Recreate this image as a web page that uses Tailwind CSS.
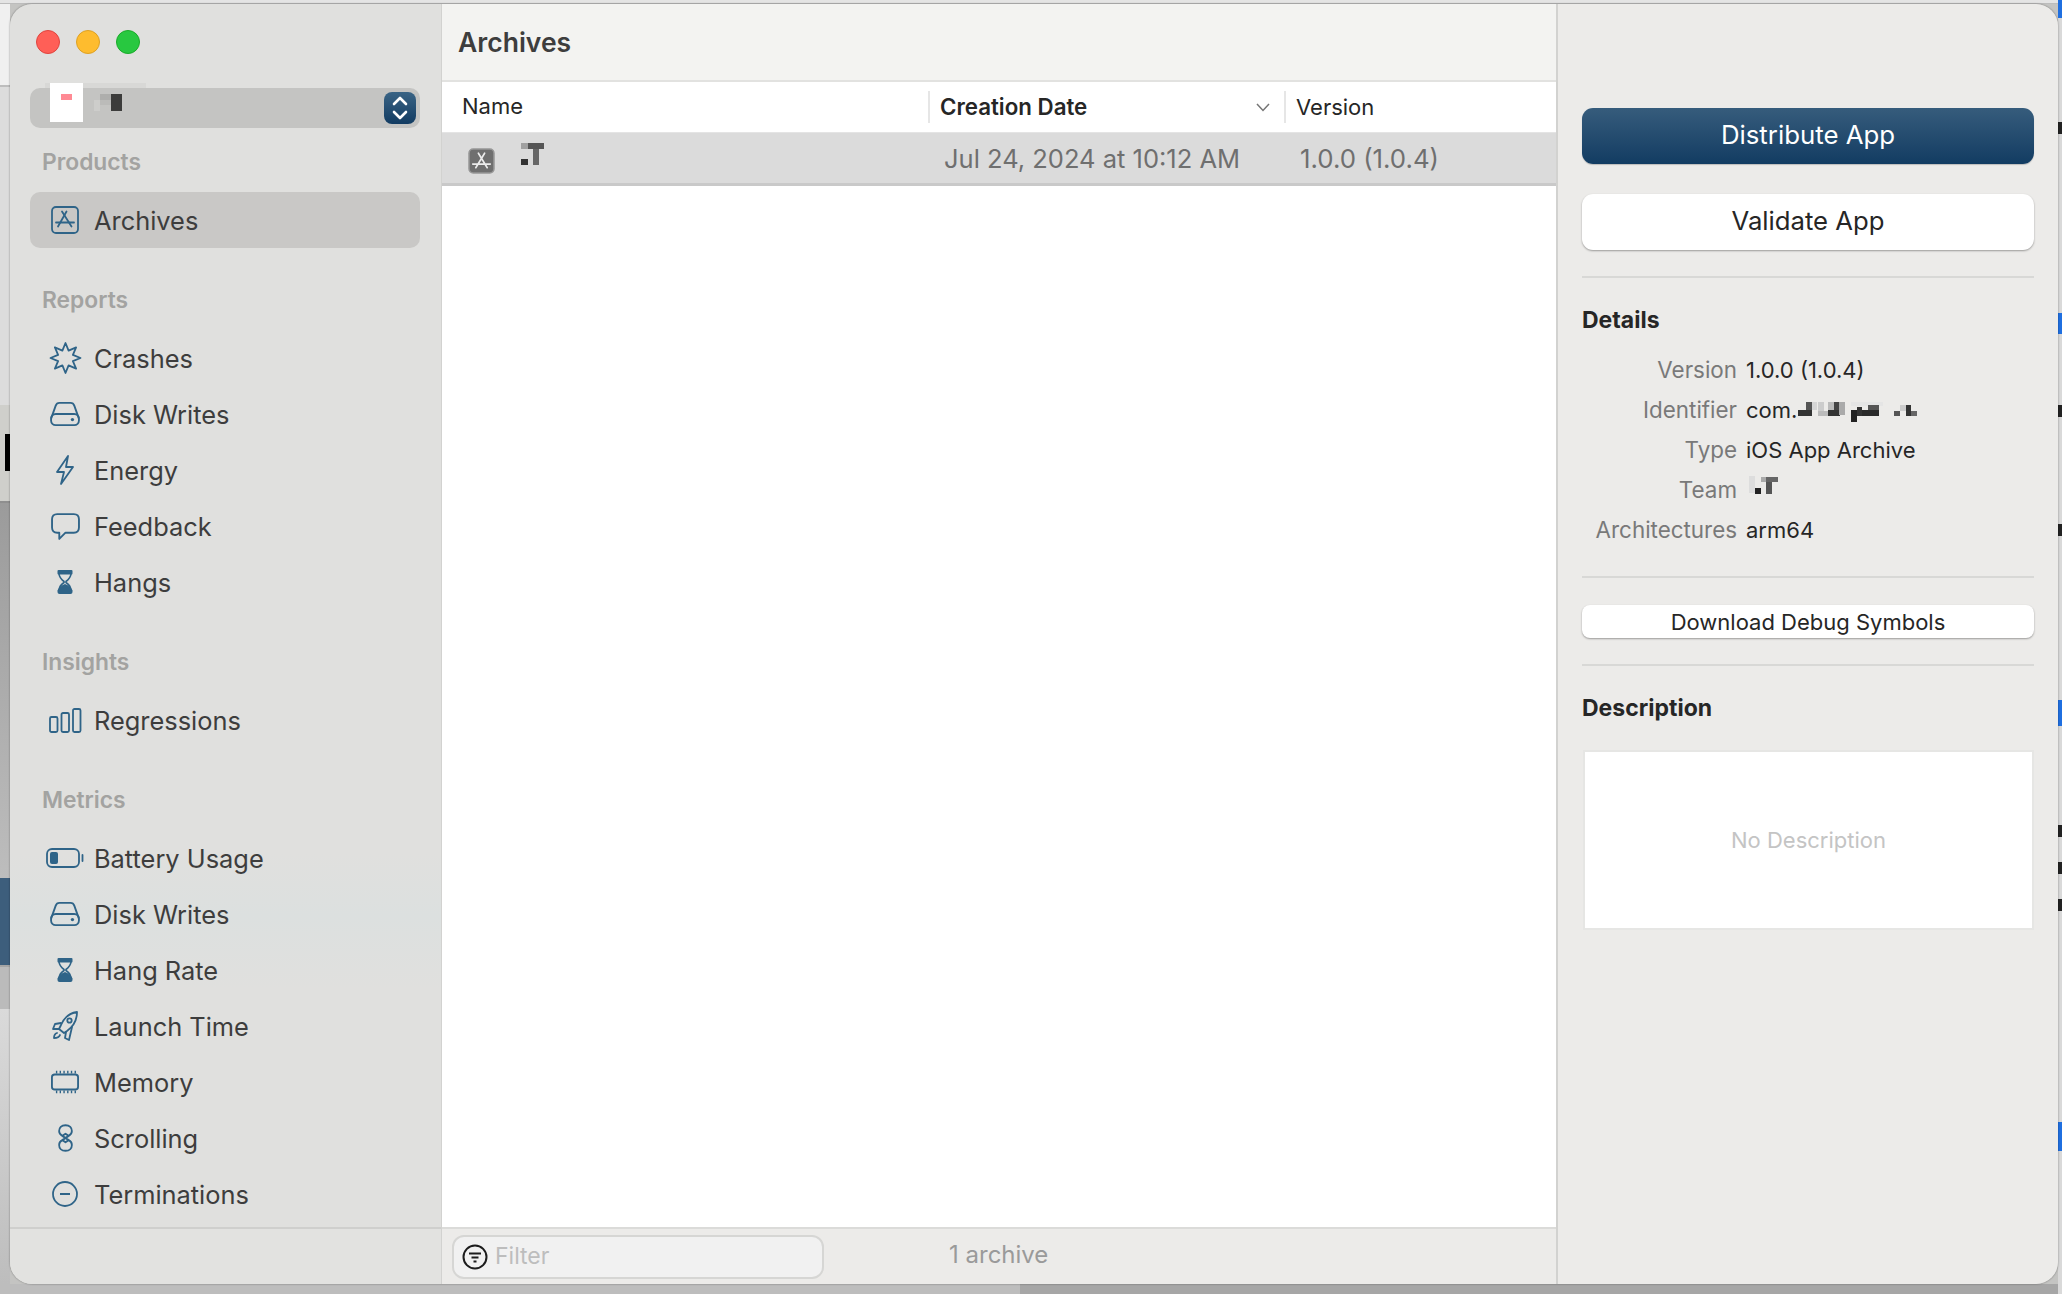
<!DOCTYPE html>
<html lang="en">
<head>
    <meta charset="UTF-8">
    <title>Archives</title>
    <script src="https://cdn.jsdelivr.net/npm/@tailwindcss/browser@4"></script>
</head>
<body class="relative w-[2062px] h-[1294px] overflow-hidden bg-[#c4c4c2] font-[Inter,sans-serif]">
    <svg class="hidden">
        <symbol id="i-disk" viewBox="0 0 34 28"><path d="M2 19 L7 5 Q8 2 11 2 H23 Q26 2 27 5 L32 19" fill="none" stroke="currentColor" stroke-width="2"/><rect x="2" y="14" width="30" height="12" rx="5" fill="none" stroke="currentColor" stroke-width="2"/><circle cx="25" cy="20" r="1.8" fill="currentColor"/></symbol>
        <symbol id="i-hourglass" viewBox="0 0 16 24"><rect x="0.5" y="0" width="15" height="4.500" rx="1" fill="currentColor"/><path d="M2 4 Q2.500 8 7 11.500 V12.500 Q2.500 15.500 2 20 M14 4 Q13.500 8 9 11.500 V12.500 Q13.500 15.500 14 20" fill="none" stroke="currentColor" stroke-width="1.600"/><path d="M8 14 Q14 16.500 15.500 20.500 V22 Q15.500 24 13.500 24 H2.500 Q0.500 24 0.500 22 V20.500 Q2 16.500 8 14 Z" fill="currentColor"/></symbol>
    </svg>

    <!-- stuff behind the window -->
    <div class="absolute left-0 top-0 w-[10px] h-full flex flex-col">
        <div class="h-[87px] bg-[#f0f0f0] border-b-2 border-[#bdbdbd]"></div>
        <div class="h-[318px] bg-[#dcdcdc]"></div>
        <div class="h-[98px] bg-[#cfcfcb] border-b-2 border-[#8f8f8f] flex flex-col items-end pt-[29px]"><div class="w-[5px] h-[37px] bg-black"></div></div>
        <div class="h-[375px] bg-linear-to-b from-[#9b9b9b] to-[#bdbdbd]"></div>
        <div class="h-[87px] bg-[#3d5e7c]"></div>
        <div class="h-[44px] bg-[#bbbbbb] border-t-2 border-[#a5a5a5]"></div>
        <div class="flex-1 bg-linear-to-b from-[#dadada] to-[#bcbcbc]"></div>
    </div>
    <div class="absolute left-0 top-0 w-full h-[4px] bg-[#e4e4e4] border-b border-[#bcbcbc]"></div>
    <div class="absolute left-0 top-[1284px] w-full h-[10px] flex">
        <div class="w-[1020px] bg-[#bdbdbd]"></div>
        <div class="flex-1 bg-[#a6a6a6]"></div>
    </div>
    <div class="absolute left-[2058px] top-0 w-[4px] h-full bg-[#d9d9d9]">
        <div class="absolute left-0 top-0 w-[4px] h-[18px] bg-[#1f6fe0]"></div>
        <div class="absolute left-0 top-[122px] w-[4px] h-[12px] bg-[#222]"></div>
        <div class="absolute left-0 top-[313px] w-[4px] h-[21px] bg-[#1f6fe0]"></div>
        <div class="absolute left-0 top-[405px] w-[4px] h-[12px] bg-[#222]"></div>
        <div class="absolute left-0 top-[524px] w-[4px] h-[12px] bg-[#222]"></div>
        <div class="absolute left-0 top-[700px] w-[4px] h-[26px] bg-[#1f6fe0]"></div>
        <div class="absolute left-0 top-[825px] w-[4px] h-[12px] bg-[#222]"></div>
        <div class="absolute left-0 top-[862px] w-[4px] h-[12px] bg-[#222]"></div>
        <div class="absolute left-0 top-[899px] w-[4px] h-[12px] bg-[#222]"></div>
        <div class="absolute left-0 top-[1122px] w-[4px] h-[29px] bg-[#1f6fe0]"></div>
    </div>

    <!-- window -->
    <div class="absolute left-[10px] top-[4px] w-[2048px] h-[1280px] rounded-[22px] overflow-hidden flex shadow-[0_0_2px_rgba(0,0,0,0.45)]">

        <!-- sidebar -->
        <aside class="w-[431px] shrink-0 flex flex-col bg-[linear-gradient(to_bottom,#e0e0de_0,#e0e0de_850px,#dce0df_911px,#e0e0de_985px)] text-[#3d3d3d] text-[25.4px]">
            <div class="h-[84px] shrink-0 flex gap-[16px] pl-[26px] pt-[26px]">
                <span class="w-[24px] h-[24px] rounded-full bg-[#ff5f57] border border-[#e0443e]"></span>
                <span class="w-[24px] h-[24px] rounded-full bg-[#febc2e] border border-[#dea123]"></span>
                <span class="w-[24px] h-[24px] rounded-full bg-[#28c840] border border-[#1aab29]"></span>
            </div>

            <div class="relative ml-[20px] mr-[21px] h-[40px] shrink-0 rounded-[10px] bg-[#c4c4c2]">
                <div class="absolute left-[15px] top-[-5px] w-[101px] h-[5px] bg-[#d8d8d6]"></div>
                <div class="absolute left-[20px] top-[-5px] w-[33px] h-[39px] bg-white"></div>
                <div class="absolute left-[31px] top-[6px] w-[11px] h-[6px] bg-[#ff8a94]"></div>
                <svg class="absolute left-[64px] top-[6px]" width="28" height="17" shape-rendering="crispEdges"><rect x="6" y="0" width="11" height="6" fill="#aeaeac"/><rect x="0" y="6" width="6" height="11" fill="#cdcdcb"/><rect x="6" y="6" width="11" height="5" fill="#bbbbb9"/><rect x="17" y="0" width="11" height="17" fill="#3c3c3b"/></svg>
                <div class="absolute right-[4px] top-[4px] w-[32px] h-[32px] rounded-[8px] bg-linear-to-b from-[#3a6485] to-[#123c62] flex items-center justify-center">
                    <svg width="16" height="26" viewBox="0 0 16 26" fill="none" stroke="white" stroke-width="2.6" stroke-linecap="round" stroke-linejoin="round"><path d="M2 9 L8 3 L14 9"/><path d="M2 17 L8 23 L14 17"/></svg>
                </div>
            </div>

            <div class="mt-[14px] ml-[20px] mr-[21px] flex flex-col text-[#2f6488]">
                <div class="h-[40px] mb-[10px] pl-[12px] flex items-center text-[22.8px] font-semibold text-[#a3a3a1]">Products</div>
                <div class="h-[56px] rounded-[10px] bg-[#c9c8c6] pl-[15px] flex items-center gap-[9px]">
                    <span class="w-[40px] flex justify-center"><svg width="28" height="28" viewBox="0 0 28 28" fill="none" stroke="currentColor" stroke-width="1.8" stroke-linecap="round"><rect x="1" y="1" width="26" height="26" rx="4"/><path d="M11 5.500 L20.500 20.500"/><path d="M15.500 5.500 L7 20.500"/><path d="M5 16.500 H23"/></svg></span>
                    <span class="mt-[2px] text-[#3d3d3d]">Archives</span>
                </div>

                <div class="h-[40px] mt-[32px] mb-[10px] pl-[12px] flex items-center text-[22.8px] font-semibold text-[#a3a3a1]">Reports</div>
                <div class="h-[56px] pl-[15px] flex items-center gap-[9px]">
                    <span class="w-[40px] flex justify-center"><svg width="33" height="32" viewBox="0 0 32 32" fill="none" stroke="currentColor" stroke-width="1.8" stroke-linejoin="round"><polygon points="16,1 19.100,8.600 26.600,5.400 23.400,12.900 31,16 23.400,19.100 26.600,26.600 19.100,23.400 16,31 12.900,23.400 5.400,26.600 8.600,19.100 1,16 8.600,12.900 5.400,5.400 12.900,8.600"/></svg></span>
                    <span class="mt-[2px] text-[#3d3d3d]">Crashes</span>
                </div>
                <div class="h-[56px] pl-[15px] flex items-center gap-[9px]">
                    <span class="w-[40px] flex justify-center"><svg width="32" height="26"><use href="#i-disk"/></svg></span>
                    <span class="mt-[2px] text-[#3d3d3d]">Disk Writes</span>
                </div>
                <div class="h-[56px] pl-[15px] flex items-center gap-[9px]">
                    <span class="w-[40px] flex justify-center"><svg width="20" height="30" viewBox="0 0 20 30" fill="none" stroke="currentColor" stroke-width="1.8" stroke-linejoin="round"><path d="M13 1 L2 17 H9 L6 29 L18 12 H11 Z"/></svg></span>
                    <span class="mt-[2px] text-[#3d3d3d]">Energy</span>
                </div>
                <div class="h-[56px] pl-[15px] flex items-center gap-[9px]">
                    <span class="w-[40px] flex justify-center"><svg width="29" height="27" viewBox="0 0 28 26" fill="none" stroke="currentColor" stroke-width="1.8" stroke-linejoin="round"><path d="M6 1 H22 Q27 1 27 6 V14 Q27 19 22 19 H14 L8 25 V19 H6 Q1 19 1 14 V6 Q1 1 6 1 Z"/></svg></span>
                    <span class="mt-[2px] text-[#3d3d3d]">Feedback</span>
                </div>
                <div class="h-[56px] pl-[15px] flex items-center gap-[9px]">
                    <span class="w-[40px] flex justify-center"><svg width="16" height="24"><use href="#i-hourglass"/></svg></span>
                    <span class="mt-[2px] text-[#3d3d3d]">Hangs</span>
                </div>

                <div class="h-[40px] mt-[32px] mb-[10px] pl-[12px] flex items-center text-[22.8px] font-semibold text-[#a3a3a1]">Insights</div>
                <div class="h-[56px] pl-[15px] flex items-center gap-[9px]">
                    <span class="w-[40px] flex justify-center"><svg width="33" height="25" viewBox="0 0 33 25" fill="none" stroke="currentColor" stroke-width="1.8"><rect x="1" y="9" width="7.500" height="15" rx="1.500"/><rect x="12.500" y="5" width="7.500" height="19" rx="1.500"/><rect x="24" y="1" width="7.500" height="23" rx="1.500"/></svg></span>
                    <span class="mt-[2px] text-[#3d3d3d]">Regressions</span>
                </div>

                <div class="h-[40px] mt-[32px] mb-[10px] pl-[12px] flex items-center text-[22.8px] font-semibold text-[#a3a3a1]">Metrics</div>
                <div class="h-[56px] pl-[15px] flex items-center gap-[9px]">
                    <span class="w-[40px] flex justify-center"><svg width="38" height="20" viewBox="0 0 38 20" fill="none" stroke="currentColor" stroke-width="1.8"><rect x="1" y="1" width="32" height="18" rx="5"/><rect x="4" y="4" width="8" height="12" rx="2" fill="currentColor" stroke="none"/><path d="M36.500 7 V13" stroke-linecap="round"/></svg></span>
                    <span class="mt-[2px] text-[#3d3d3d]">Battery Usage</span>
                </div>
                <div class="h-[56px] pl-[15px] flex items-center gap-[9px]">
                    <span class="w-[40px] flex justify-center"><svg width="32" height="26"><use href="#i-disk"/></svg></span>
                    <span class="mt-[2px] text-[#3d3d3d]">Disk Writes</span>
                </div>
                <div class="h-[56px] pl-[15px] flex items-center gap-[9px]">
                    <span class="w-[40px] flex justify-center"><svg width="16" height="24"><use href="#i-hourglass"/></svg></span>
                    <span class="mt-[2px] text-[#3d3d3d]">Hang Rate</span>
                </div>
                <div class="h-[56px] pl-[15px] flex items-center gap-[9px]">
                    <span class="w-[40px] flex justify-center"><svg width="28" height="30" viewBox="0 0 28 30" fill="none" stroke="currentColor" stroke-width="1.8" stroke-linejoin="round" stroke-linecap="round"><path d="M26 1 C19 2 13 7 10 14 L8 18 L13 22 L16 20 C23 15 26 9 26 1 Z"/><circle cx="18.500" cy="9.500" r="2.200"/><path d="M10 12 L4 13 L2 18 L8 18"/><path d="M15 21 L14 27 L18 29 L21 16"/><path d="M6 22 C3 23 3 27 3 27 C5 27 8 27 9 24"/></svg></span>
                    <span class="mt-[2px] text-[#3d3d3d]">Launch Time</span>
                </div>
                <div class="h-[56px] pl-[15px] flex items-center gap-[9px]">
                    <span class="w-[40px] flex justify-center"><svg width="28" height="24" viewBox="0 0 30 24" fill="none" stroke="currentColor" stroke-width="2"><rect x="1" y="4" width="28" height="16" rx="3"/><path stroke-width="1.500" d="M6 0 V3 M10 0 V3 M14 0 V3 M18 0 V3 M22 0 V3 M26 0 V3 M6 21 V24 M10 21 V24 M14 21 V24 M18 21 V24 M22 21 V24 M26 21 V24"/></svg></span>
                    <span class="mt-[2px] text-[#3d3d3d]">Memory</span>
                </div>
                <div class="h-[56px] pl-[15px] flex items-center gap-[9px]">
                    <span class="w-[40px] flex justify-center"><svg width="17" height="28" viewBox="0 0 16 26" fill="none" stroke="currentColor" stroke-width="1.700" stroke-linejoin="round"><path d="M8 1 C4 1 2 3.500 2 6.500 C2 8.500 3 10 5 11 L8 9 L11 11 C13 10 14 8.500 14 6.500 C14 3.500 12 1 8 1 Z"/><path d="M8 25 C4 25 2 22.500 2 19.500 C2 17.500 3 16 5 15 L8 17 L11 15 C13 16 14 17.500 14 19.500 C14 22.500 12 25 8 25 Z"/><path d="M5 11 L11 15 M11 11 L5 15"/></svg></span>
                    <span class="mt-[2px] text-[#3d3d3d]">Scrolling</span>
                </div>
                <div class="h-[56px] pl-[15px] flex items-center gap-[9px]">
                    <span class="w-[40px] flex justify-center"><svg width="26" height="26" viewBox="0 0 26 26" fill="none" stroke="currentColor" stroke-width="1.800"><circle cx="13" cy="13" r="12"/><path d="M8 13 H18"/></svg></span>
                    <span class="mt-[2px] text-[#3d3d3d]">Terminations</span>
                </div>
            </div>

            <div class="mt-auto h-[57px] border-t-2 border-[#cfcfcd] bg-[#e2e2e0]"></div>
        </aside>

        <!-- archive list -->
        <main class="w-[1117px] shrink-0 flex flex-col bg-white border-l border-r-2 border-[#d2d2d0]">
            <div class="h-[78px] shrink-0 pl-[16px] pt-[2px] flex items-center bg-[#f3f3f1] border-b-2 border-[#e2e2e0] text-[26.5px] font-semibold text-[#3d3d3d]">Archives</div>

            <div class="h-[50px] shrink-0 flex items-center text-[22px] text-[#262626]">
                <div class="w-[486px] pl-[20px] pb-[1px]">Name</div>
                <div class="w-[356px] h-[32px] pl-[10px] pr-[14px] flex items-center justify-between border-l-2 border-[#e6e6e6]">
                    <span class="text-[22.3px] font-semibold">Creation Date</span>
                    <svg width="14" height="9" viewBox="0 0 14 9" fill="none" stroke="#757575" stroke-width="1.500"><path d="M1 1 L7 7.500 L13 1"/></svg>
                </div>
                <div class="flex-1 h-[32px] pl-[10px] flex items-center border-l-2 border-[#e6e6e6]">Version</div>
            </div>

            <div class="h-[54px] shrink-0 flex items-center bg-[#dbdbdb] border-t border-[#e4e4e4] border-b-[3px] border-b-[#c9c9c9] text-[25.5px] text-[#6f6f6f]">
                <div class="w-[486px] pl-[26px] flex items-center gap-[26px]">
                    <svg class="mt-[5px]" width="27" height="26" viewBox="0 0 26 25" fill="none" stroke-linecap="round"><rect x="1" y="1" width="24" height="23" rx="4" fill="#6f6f6f" stroke="#969696" stroke-width="1.500"/><path d="M10 5 L18.500 19 M16 5 L7.500 19 M4.500 15.500 H21.500" stroke="#ececec" stroke-width="1.600"/></svg>
                    <svg class="mt-[-8px]" width="23" height="22" shape-rendering="crispEdges"><rect x="0" y="0" width="7" height="6" fill="#a0a0a0"/><rect x="0" y="16" width="7" height="6" fill="#333333"/><rect x="7" y="0" width="16" height="6" fill="#555555"/><rect x="12" y="6" width="6" height="16" fill="#666666"/></svg>
                </div>
                <div class="w-[356px] pl-[16px] mt-[2px]">Jul 24, 2024 at 10:12 AM</div>
                <div class="flex-1 pl-[16px] mt-[2px] text-[25.8px]">1.0.0 (1.0.4)</div>
            </div>

            <div class="flex-1"></div>

            <div class="h-[57px] shrink-0 flex items-center bg-[#ecebe9] border-t-2 border-[#dbdbd9]">
                <div class="ml-[10px] w-[372px] h-[44px] rounded-[12px] bg-[#f1f1f1] border-2 border-[#d6d6d4] flex items-center pl-[8px] gap-[7px] text-[23px] text-[#bdbdbd]">
                    <svg width="26" height="26" viewBox="0 0 26 26" fill="none" stroke="#1c1c1c" stroke-width="2"><circle cx="13" cy="13" r="11.500"/><path d="M7 9.500 H19 M9.500 13.500 H16.500 M11.500 17.500 H14.500"/></svg>
                    <span>Filter</span>
                </div>
                <div class="ml-[125px] mb-[4px] text-[24px] text-[#9a9a9a]">1 archive</div>
            </div>
        </main>

        <!-- inspector -->
        <section class="flex-1 bg-[#ecebe9] px-[24px] flex flex-col">
            <button class="mt-[104px] h-[56px] shrink-0 pb-[2px] rounded-[11px] bg-linear-to-b from-[#365c7c] to-[#123c62] text-white text-[25.8px] shadow-[0_1px_1px_rgba(0,0,0,0.2)]">Distribute App</button>
            <button class="mt-[30px] h-[56px] shrink-0 pb-[2px] rounded-[11px] bg-white text-[#262626] text-[25.7px] shadow-[0_1px_2px_rgba(0,0,0,0.35)]">Validate App</button>
            <div class="mt-[26px] h-[2px] shrink-0 bg-[#d8d8d6]"></div>

            <div class="mt-[27px] h-[30px] flex items-center text-[23px] font-bold text-[#262626]">Details</div>
            <div class="mt-[15px] grid grid-cols-[155px_1fr] auto-rows-[40px] gap-x-[9px] items-center text-[22px] text-[#262626]">
                <div class="text-right text-[22.4px] text-[#797979]">Version</div>
                <div>1.0.0 (1.0.4)</div>
                <div class="text-right text-[22.4px] text-[#797979]">Identifier</div>
                <div class="flex items-center gap-0">com.<svg class="mt-[2px]" width="122" height="23" viewBox="770 330 365 70" shape-rendering="crispEdges"><rect x="795" y="335" width="17" height="25" fill="#555"/><rect x="770" y="360" width="42" height="18" fill="#333"/><rect x="812" y="335" width="17" height="25" fill="#d5d5d5"/><rect x="830" y="335" width="18" height="27" fill="#ccc"/><rect x="830" y="362" width="32" height="16" fill="#bbb"/><rect x="862" y="335" width="18" height="25" fill="#bbb"/><rect x="862" y="360" width="35" height="18" fill="#333"/><rect x="880" y="335" width="16" height="25" fill="#444"/><rect x="896" y="335" width="17" height="40" fill="#aaa"/><rect x="930" y="335" width="100" height="12" fill="#e5e5e5"/><rect x="930" y="360" width="18" height="36" fill="#222"/><rect x="948" y="350" width="18" height="28" fill="#333"/><rect x="966" y="360" width="50" height="18" fill="#2a2a2a"/><rect x="982" y="345" width="33" height="15" fill="#555"/><rect x="1062" y="362" width="18" height="16" fill="#555"/><rect x="1080" y="345" width="18" height="18" fill="#ccc"/><rect x="1098" y="345" width="17" height="33" fill="#333"/><rect x="1115" y="362" width="16" height="16" fill="#666"/></svg></div>
                <div class="text-right text-[22.4px] text-[#797979]">Type</div>
                <div>iOS App Archive</div>
                <div class="text-right text-[22.4px] text-[#797979]">Team</div>
                <div><svg class="ml-[3px] mt-[-10px]" width="29" height="18" viewBox="630 560 85 52" shape-rendering="crispEdges"><rect x="630" y="560" width="18" height="50" fill="#ddd"/><rect x="648" y="595" width="16" height="16" fill="#222"/><rect x="664" y="562" width="16" height="16" fill="#aaa"/><rect x="680" y="562" width="34" height="16" fill="#666"/><rect x="680" y="578" width="18" height="34" fill="#555"/></svg></div>
                <div class="text-right text-[22.4px] text-[#797979]">Architectures</div>
                <div>arm64</div>
            </div>
            <div class="mt-[26px] h-[2px] shrink-0 bg-[#d8d8d6]"></div>

            <button class="mt-[27px] h-[33px] shrink-0 pt-[1px] rounded-[8px] bg-white text-[#262626] text-[22px] shadow-[0_1px_2px_rgba(0,0,0,0.35)]">Download Debug Symbols</button>
            <div class="mt-[26px] h-[2px] shrink-0 bg-[#d8d8d6]"></div>

            <div class="mt-[27px] h-[30px] flex items-center text-[23px] font-bold text-[#262626]">Description</div>
            <div class="mt-[27px] ml-[1px] h-[180px] shrink-0 bg-white border-2 border-[#e6e6e4] flex items-center justify-center text-[22px] text-[#c4c4c4]">No Description</div>
        </section>
    </div>
</body>
</html>
